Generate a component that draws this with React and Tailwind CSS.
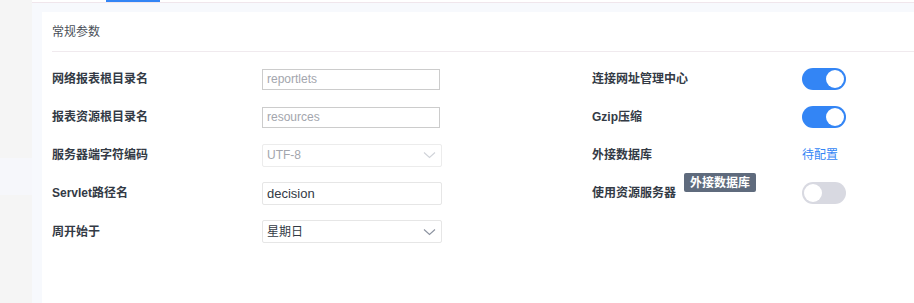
import React from "react";

const font = { fontFamily: '"Liberation Sans", "Noto Sans CJK SC", sans-serif' };

function Chevron({ color }) {
  return (
    <svg width="13" height="8" viewBox="0 0 13 8" fill="none">
      <path d="M1 1.5 L6.5 6.5 L12 1.5" stroke={color} strokeWidth="1.1" />
    </svg>
  );
}

function Toggle({ on }) {
  return (
    <div
      className={`w-[44px] h-[22px] rounded-full flex items-center px-[2px] ${
        on ? "bg-[#3385f5] justify-end" : "bg-[#d8d9e1] justify-start"
      }`}
    >
      <div className="w-[18px] h-[18px] rounded-full bg-white" />
    </div>
  );
}

function Label({ children }) {
  return (
    <div className="w-[210px] shrink-0 text-[12px] font-semibold text-[#333a45]">{children}</div>
  );
}

export default function App() {
  return (
    <div className="w-[914px] h-[303px] flex overflow-hidden bg-white" style={font}>
      <div className="w-[32px] shrink-0 bg-[#f5f5f5] flex flex-col">
        <div className="h-[158px]" />
        <div className="h-[37px] bg-[#f6f7fb]" />
      </div>
      <div className="flex-1 flex flex-col bg-[#f7f9fd]">
        <div className="h-[3px] border-b border-[#f0e6ec] relative bg-white">
          <div className="absolute left-[74px] top-0 w-[54px] h-[2px] bg-[#3385f5]" />
        </div>
        <div className="flex-1 pl-[10px] pt-[9px]">
          <div className="h-full bg-white pl-[10px]">
            <div className="h-[40px] border-b border-[#f0eaee] flex items-center text-[12px] text-[#4a4f58]">
              常规参数
            </div>
            <div className="flex pt-[8px]">
              <div className="w-[540px] flex flex-col">
                <div className="h-[38px] flex items-center">
                  <Label>网络报表根目录名</Label>
                  <div className="w-[178px] h-[21px] border border-[#cccccc] flex items-center px-[4px] text-[12px] text-[#a3a6ad]">
                    reportlets
                  </div>
                </div>
                <div className="h-[38px] flex items-center">
                  <Label>报表资源根目录名</Label>
                  <div className="w-[178px] h-[21px] border border-[#cccccc] flex items-center px-[4px] text-[12px] text-[#a3a6ad]">
                    resources
                  </div>
                </div>
                <div className="h-[38px] flex items-center">
                  <Label>服务器端字符编码</Label>
                  <div className="w-[180px] h-[23px] border border-[#ececec] rounded-[2px] flex items-center justify-between pl-[4px] pr-[5px] text-[12px] text-[#a3a6ad]">
                    <span>UTF-8</span>
                    <Chevron color="#d0d3d9" />
                  </div>
                </div>
                <div className="h-[38.5px] flex items-center">
                  <Label>Servlet路径名</Label>
                  <div className="w-[180px] h-[23px] border border-[#e6e6e6] rounded-[2px] flex items-center px-[4px] text-[13px] text-[#333a45]">
                    decision
                  </div>
                </div>
                <div className="h-[38.5px] flex items-center">
                  <Label>周开始于</Label>
                  <div className="w-[180px] h-[23px] border border-[#e6e6e6] rounded-[2px] flex items-center justify-between pl-[4px] pr-[5px] text-[12px] text-[#333a45]">
                    <span>星期日</span>
                    <Chevron color="#8c93a0" />
                  </div>
                </div>
              </div>
              <div className="flex-1 flex flex-col">
                <div className="h-[38px] flex items-center">
                  <Label>连接网址管理中心</Label>
                  <Toggle on />
                </div>
                <div className="h-[38px] flex items-center">
                  <Label>Gzip压缩</Label>
                  <Toggle on />
                </div>
                <div className="h-[38px] flex items-center">
                  <Label>外接数据库</Label>
                  <span className="text-[12px] text-[#3385f5]">待配置</span>
                </div>
                <div className="h-[38.5px] flex items-center relative">
                  <Label>使用资源服务器</Label>
                  <Toggle />
                  <div className="absolute left-[92px] top-[-1px] h-[19px] px-[6px] rounded-[2px] bg-[#5f6b7d] text-white text-[12px] font-bold flex items-center">
                    外接数据库
                  </div>
                </div>
              </div>
            </div>
          </div>
        </div>
      </div>
    </div>
  );
}
